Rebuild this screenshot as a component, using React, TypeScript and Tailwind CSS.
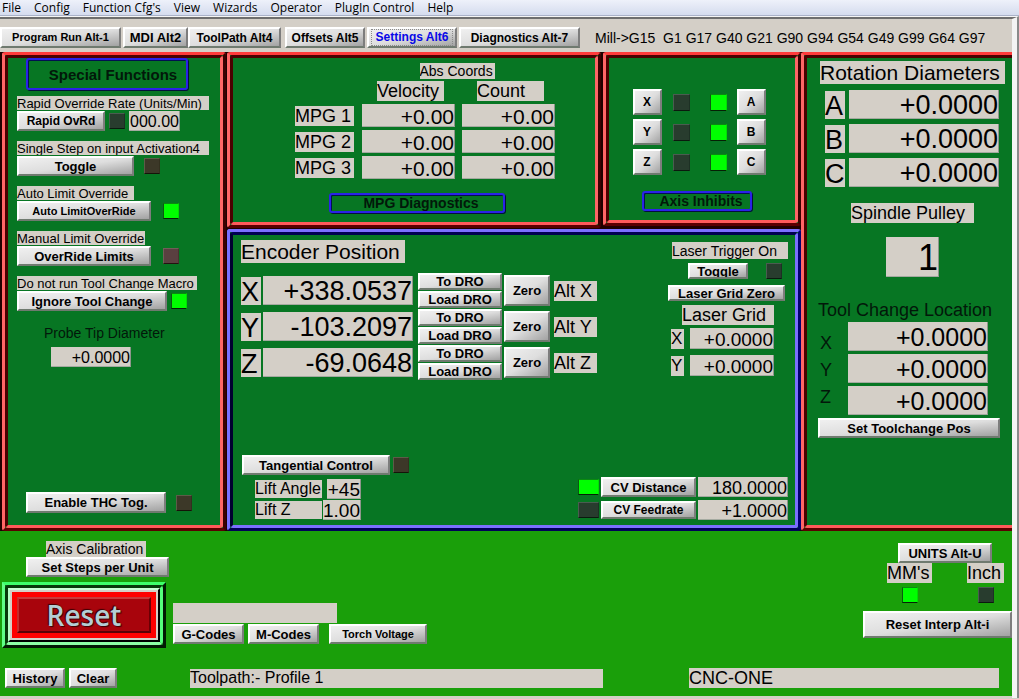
import React from "react";
import { clsx } from "clsx";

const face = "font-['Liberation_Sans',Arial,sans-serif]";

function Btn({ children, className }: { children: React.ReactNode; className?: string }) {
  return (
    <button
      type="button"
      className={clsx(
        "flex shrink-0 items-center justify-center overflow-hidden border-2 border-t-white border-r-[#7d7d7d] border-b-[#6f7a6f] border-l-white bg-linear-to-br from-[#f0f0f0] via-[#dedede] to-[#a2a2a2] font-bold whitespace-nowrap text-black",
        className,
      )}
    >
      {children}
    </button>
  );
}

function Tag({ children, className }: { children?: React.ReactNode; className?: string }) {
  return (
    <div className={clsx("flex shrink-0 items-center overflow-hidden bg-[#d4cfc7] whitespace-nowrap text-black", className)}>
      {children}
    </div>
  );
}

function Dro({ value, label, className }: { value: string; label: string; className?: string }) {
  return (
    <input
      type="text"
      aria-label={label}
      defaultValue={value}
      className={clsx(
        "shrink-0 border-r border-b border-r-[#8f968c] border-b-[#a4aaa0] bg-[#d4cfc7] p-0 pt-[3px] text-right text-black outline-none",
        className,
      )}
    />
  );
}

const ledTones = {
  on: "border-t-[#0a8a10] border-l-[#0a5a10] border-r-[#00e000] border-b-[#052005] bg-[#00ff00]",
  off: "border-t-[#4a5c50] border-l-[#4a5c50] border-r-[#1d3024] border-b-[#0a1a0e] bg-[#283c2e]",
  amber: "border-t-[#5c5c48] border-l-[#5c5c48] border-r-[#33301f] border-b-[#141408] bg-[#3c3828]",
  red: "border-t-[#6f5f58] border-l-[#6f5f58] border-r-[#4a3230] border-b-[#241210] bg-[#5a4040]",
};

function Led({ tone, className = "size-4" }: { tone: keyof typeof ledTones; className?: string }) {
  return <span className={clsx("block shrink-0 border", ledTones[tone], className)} />;
}

function Panel({
  tone,
  className,
  inner,
  children,
}: {
  tone: "red" | "blue";
  className?: string;
  inner?: string;
  children: React.ReactNode;
}) {
  const outerTone =
    tone === "red"
      ? "border-t-[#ff3b3b] border-l-[#ff6666] border-r-[#3a0000] border-b-[#5a0000]"
      : "border-t-[#7a70ff] border-l-[#7a70ff] border-r-[#000070] border-b-[#000058]";
  const innerTone =
    tone === "red"
      ? "border-t-[#4a0000] border-l-[#4a0000] border-r-[#ff6666] border-b-[#ff5a5a]"
      : "border-t-[#000050] border-l-[#000030] border-r-[#7a70ff] border-b-[#7a70ff]";
  return (
    <section className={clsx("flex flex-col rounded-[3px] border-[3px] bg-[#077623]", outerTone, className)}>
      <div className={clsx("flex min-w-0 flex-1 flex-col rounded-[3px] border-[3px]", innerTone, inner)}>{children}</div>
    </section>
  );
}

function Caption({ children, className }: { children: React.ReactNode; className?: string }) {
  return (
    <h2
      className={clsx(
        "flex shrink-0 items-center justify-center rounded-[3px] border-2 border-[#2a22e8] font-bold whitespace-nowrap text-[#02180a] shadow-[1px_1px_0_0_#03103a,inset_1px_1px_0_#021050]",
        className,
      )}
    >
      {children}
    </h2>
  );
}

const menus = ["File", "Config", "Function Cfg's", "View", "Wizards", "Operator", "PlugIn Control", "Help"];

const encoderAxes = [
  { axis: "X", value: "+338.0537" },
  { axis: "Y", value: "-103.2097" },
  { axis: "Z", value: "-69.0648" },
];

function SpecialFunctions() {
  return (
    <Panel tone="red" className="ml-0.5 w-56 shrink-0">
      <Caption className="ml-[18px] h-8 w-[162px] pl-3 text-[15px]">Special Functions</Caption>
      <div className="mt-1.5 ml-[9px] flex flex-col gap-2.5">
        <div className="flex flex-col gap-px">
          <Tag className="h-3.5 w-48 text-[13px]">Rapid Override Rate (Units/Min)</Tag>
          <div className="flex items-center gap-1">
            <Btn className="h-5 w-[88px] text-[12px]">Rapid OvRd</Btn>
            <Led tone="off" />
            <Dro label="Rapid override rate" value="000.00" className="h-5 w-[51px] text-[16px]" />
          </div>
        </div>
        <div className="flex flex-col gap-px">
          <Tag className="h-3.5 w-48 text-[13px]">Single Step on input Activation4</Tag>
          <div className="flex items-center gap-2.5">
            <Btn className="h-5 w-[117px] text-[13px]">Toggle</Btn>
            <Led tone="amber" />
          </div>
        </div>
        <div className="flex flex-col gap-px">
          <Tag className="h-3.5 w-[117px] text-[13px]">Auto Limit Override</Tag>
          <div className="flex items-center gap-3">
            <Btn className="h-5 w-[134px] text-[11px]">Auto LimitOverRide</Btn>
            <Led tone="on" />
          </div>
        </div>
        <div className="flex flex-col gap-px">
          <Tag className="h-3.5 w-32 text-[13px]">Manual Limit Override</Tag>
          <div className="flex items-center gap-3">
            <Btn className="h-5 w-[134px] text-[13px]">OverRide Limits</Btn>
            <Led tone="red" />
          </div>
        </div>
        <div className="flex flex-col gap-px">
          <Tag className="h-3.5 w-[180px] text-[13px]">Do not run Tool Change Macro</Tag>
          <div className="flex items-center gap-1">
            <Btn className="h-5 w-[150px] text-[13px]">Ignore Tool Change</Btn>
            <Led tone="on" />
          </div>
        </div>
      </div>
      <label className="mt-3 ml-9 flex flex-col gap-1 text-[14px] leading-5 text-[#02180a]">
        Probe Tip Diameter
        <Dro label="Probe Tip Diameter" value="+0.0000" className="ml-[7px] h-5 w-20 text-[16px]" />
      </label>
      <div className="mt-auto mb-3 ml-[18px] flex items-center gap-2.5">
        <Btn className="h-[21px] w-[140px] text-[13px]">Enable THC Tog.</Btn>
        <Led tone="amber" />
      </div>
    </Panel>
  );
}

function MpgPanel() {
  return (
    <Panel tone="red" className="h-[176px] flex-1" inner="items-center">
      <Tag className="mt-[5px] ml-[86px] h-4 w-[75px] text-[14px]">Abs Coords</Tag>
      <div className="mt-0.5 ml-[22px] grid grid-cols-[60px_93px_93px] gap-x-[7px] gap-y-[3px]">
        <Tag className="col-start-2 ml-[15px] h-5 w-[67px] text-[18px]">Velocity</Tag>
        <Tag className="ml-[15px] h-5 w-[67px] text-[18px]">Count</Tag>
        {["1", "2", "3"].map((n) => (
          <React.Fragment key={n}>
            <Tag className="mt-0.5 h-5 w-[59px] text-[18px]">MPG {n}</Tag>
            <Dro label={`MPG ${n} velocity`} value="+0.00" className="h-[23px] w-full text-[21px]" />
            <Dro label={`MPG ${n} count`} value="+0.00" className="h-[23px] w-full text-[21px]" />
          </React.Fragment>
        ))}
      </div>
      <Caption className="mt-3.5 ml-1.5 h-5 w-44 pl-2 text-[14px]">MPG Diagnostics</Caption>
    </Panel>
  );
}

function AxisInhibits() {
  const rows = [
    ["X", "A"],
    ["Y", "B"],
    ["Z", "C"],
  ];
  return (
    <Panel tone="red" className="h-[174px] w-[198px] shrink-0" inner="items-center">
      <div className="mt-[31px] mr-1.5 flex flex-col gap-1">
        {rows.map(([left, right]) => (
          <div key={left} className="flex items-center">
            <Btn className="h-[26px] w-[29px] text-[12px]">{left}</Btn>
            <Led tone="off" className="ml-[11px] size-[17px]" />
            <Led tone="on" className="ml-5 size-[17px]" />
            <Btn className="ml-2.5 h-[26px] w-[29px] text-[12px]">{right}</Btn>
          </div>
        ))}
      </div>
      <Caption className="mt-4 mr-2.5 h-5 w-[110px] pl-2 text-[14px]">Axis Inhibits</Caption>
    </Panel>
  );
}

function EncoderPanel() {
  return (
    <Panel tone="blue" className="mt-px min-h-[302px] flex-1" inner="justify-between">
      <div className="flex justify-between pr-1.5 pl-2">
        <div>
          <Tag className="mt-[5px] h-[23px] w-[164px] text-[21px]">Encoder Position</Tag>
          <div className="mt-2.5 flex flex-col gap-px">
            {encoderAxes.map(({ axis, value }) => (
              <div key={axis} className="flex items-center">
                <Tag className="h-7 w-5 pt-1 text-[27px]">{axis}</Tag>
                <Dro label={`${axis} encoder`} value={value} className="ml-0.5 h-[29px] w-[150px] text-[27px]" />
                <div className="ml-[5px] flex flex-col gap-px">
                  <Btn className="h-[17px] w-[84px] text-[13px]">To DRO</Btn>
                  <Btn className="h-[17px] w-[84px] text-[13px]">Load DRO</Btn>
                </div>
                <Btn className="ml-0.5 h-[31px] w-[46px] text-[13px]">Zero</Btn>
                <Tag className="ml-1 h-5 w-[43px] text-[18px]">Alt {axis}</Tag>
              </div>
            ))}
          </div>
        </div>
        <div className="mt-[7px] flex w-[121px] flex-col">
          <Tag className="ml-1 h-[17px] w-[116px] text-[14px]">Laser Trigger On</Tag>
          <div className="mt-1 ml-5 flex items-center gap-[18px]">
            <Btn className="h-4 w-[60px] text-[13px]">Toggle</Btn>
            <Led tone="off" />
          </div>
          <Btn className="mt-1.5 h-4 w-[117px] text-[13px]">Laser Grid Zero</Btn>
          <Tag className="mt-1 ml-3.5 h-5 w-[92px] text-[18px]">Laser Grid</Tag>
          {["X", "Y"].map((axis) => (
            <div key={axis} className="my-[3px] ml-[3px] flex items-center gap-1.5">
              <Tag className="h-5 w-[13px] text-[17px]">{axis}</Tag>
              <Dro label={`Laser grid ${axis}`} value="+0.0000" className="h-[21px] w-[84px] text-[19px]" />
            </div>
          ))}
        </div>
      </div>
      <div className="flex items-end justify-between pr-[7px] pb-[5px] pl-[9px]">
        <div>
          <div className="flex items-center gap-[3px]">
            <Btn className="h-5 w-[148px] text-[13px]">Tangential Control</Btn>
            <Led tone="amber" />
          </div>
          <div className="mt-1 ml-[13px] flex flex-col gap-px">
            <div className="flex items-center">
              <Tag className="h-[18px] w-[67px] text-[16px]">Lift Angle</Tag>
              <Dro label="Lift Angle" value="+45" className="ml-[5px] h-5 w-[34px] text-[19px]" />
            </div>
            <div className="flex items-center">
              <Tag className="h-[18px] w-[67px] text-[16px]">Lift Z</Tag>
              <Dro label="Lift Z" value="1.00" className="ml-px h-5 w-[38px] text-[19px]" />
            </div>
          </div>
        </div>
        <div className="flex flex-col gap-[3px]">
          <div className="flex items-center">
            <Led tone="on" className="h-4 w-[21px]" />
            <Btn className="ml-0.5 h-5 w-[95px] text-[13px]">CV Distance</Btn>
            <Dro label="CV Distance" value="180.0000" className="ml-0.5 h-5 w-[90px] text-[18px]" />
          </div>
          <div className="flex items-center">
            <Led tone="off" className="h-4 w-[21px]" />
            <Btn className="ml-0.5 h-[18px] w-[95px] text-[12px]">CV Feedrate</Btn>
            <Dro label="CV Feedrate" value="+1.0000" className="ml-0.5 h-5 w-[90px] text-[18px]" />
          </div>
        </div>
      </div>
    </Panel>
  );
}

function RotationPanel() {
  return (
    <Panel tone="red" className="w-[211px] shrink-0 rounded-r-none border-r-0" inner="rounded-r-none border-r-0">
      <Tag className="mt-[3px] ml-[13px] h-[23px] w-[185px] text-[21px]">Rotation Diameters</Tag>
      <div className="mt-1.5 ml-[18px] flex flex-col gap-[5px]">
        {["A", "B", "C"].map((axis) => (
          <div key={axis} className="flex items-center gap-1">
            <Tag className="h-7 w-5 pt-1 text-[27px]">{axis}</Tag>
            <Dro label={`Rotation diameter ${axis}`} value="+0.0000" className="h-[29px] w-[150px] text-[27px]" />
          </div>
        ))}
      </div>
      <Tag className="mt-4 ml-11 h-5 w-[123px] text-[18px]">Spindle Pulley</Tag>
      <Dro label="Spindle Pulley" value="1" className="mt-3.5 ml-[79px] h-10 w-[53px] text-[36px]" />
      <h3 className="mt-[23px] ml-[11px] text-[18px] leading-5 whitespace-nowrap text-[#02180a]">Tool Change Location</h3>
      <div className="mt-0.5 ml-[13px] flex items-start text-[18px] text-[#02180a]">
        <div className="w-7 pt-2 leading-[27px]">
          <div>X</div>
          <div>Y</div>
          <div>Z</div>
        </div>
        <div className="flex flex-col gap-[3px]">
          {["X", "Y", "Z"].map((axis) => (
            <Dro key={axis} label={`Tool change ${axis}`} value="+0.0000" className="h-[29px] w-[140px] text-[25px]" />
          ))}
        </div>
      </div>
      <Btn className="mt-[3px] ml-[11px] h-5 w-[182px] text-[13px]">Set Toolchange Pos</Btn>
    </Panel>
  );
}

function ResetButton() {
  return (
    <button type="button" className="flex h-[66px] w-[164px] border-[3px] border-t-[#3dff6a] border-r-[#021a04] border-b-[#021a04] border-l-[#5fff86] bg-[#0c6b14]">
      <span className="flex flex-1 self-stretch rounded border-[3px] border-t-[#063a0a] border-r-[#55ff7c] border-b-[#8dffa6] border-l-[#063a0a] bg-[#063a0a]">
        <span className="flex flex-1 border-2 border-t-[#c8ffd4] border-r-black border-b-black border-l-[#b8ffc8] bg-[#d4cfc7] p-0.5">
          <span className="flex flex-1 bg-[#fe0000] p-[5px]">
            <span className="flex flex-1 items-center justify-center border-2 border-t-[#c83a3a] border-r-[#6a0004] border-b-[#5a0004] border-l-[#c02c2c] bg-[#a8040c] font-['Open_Sans','Noto_Sans',sans-serif] text-[28px] leading-6 font-semibold text-[#b4ced4] [text-shadow:1px_1px_1px_#3a0004,-1px_-1px_1px_#3a0004]">
              Reset
            </span>
          </span>
        </span>
      </span>
    </button>
  );
}

function BottomArea() {
  return (
    <footer className="flex h-[165px] flex-col bg-[#1a9f0a]">
      <div className="flex justify-between">
        <div>
          <Tag className="mt-2.5 ml-[46px] h-4 w-[100px] text-[14px]">Axis Calibration</Tag>
          <Btn className="ml-[26px] h-5 w-[143px] text-[13px]">Set Steps per Unit</Btn>
          <div className="mt-[5px] ml-0.5 flex items-end gap-[7px]">
            <ResetButton />
            <div className="mb-1">
              <Tag className="h-5 w-[164px]" />
              <div className="mt-px flex">
                <Btn className="h-5 w-[71px] text-[13px]">G-Codes</Btn>
                <Btn className="ml-1 h-5 w-[71px] text-[13px]">M-Codes</Btn>
                <Btn className="ml-2.5 h-5 w-[98px] text-[11px]">Torch Voltage</Btn>
              </div>
            </div>
          </div>
        </div>
        <div className="flex w-[149px] flex-col">
          <Btn className="mt-3 ml-[35px] h-5 w-[94px] text-[13px]">UNITS Alt-U</Btn>
          <div className="ml-6 flex justify-between pr-2">
            <div className="flex w-[45px] flex-col items-center gap-1">
              <Tag className="h-5 w-full text-[18px]">MM's</Tag>
              <Led tone="on" />
            </div>
            <div className="flex w-[37px] flex-col items-center gap-1">
              <Tag className="h-5 w-full text-[18px]">Inch</Tag>
              <Led tone="off" />
            </div>
          </div>
          <Btn className="mt-2 h-[27px] w-full text-[13px]">Reset Interp Alt-i</Btn>
        </div>
      </div>
      <div className="mt-auto mb-2 flex items-center pr-[13px] pl-[5px]">
        <Btn className="h-5 w-[60px] text-[13px]">History</Btn>
        <Btn className="ml-1 h-5 w-12 text-[13px]">Clear</Btn>
        <Tag className="ml-[73px] h-[19px] w-[413px] text-[16px]">Toolpath:- Profile 1</Tag>
        <Tag className="ml-auto h-5 w-[310px] text-[18px]">CNC-ONE</Tag>
      </div>
    </footer>
  );
}

export default function App() {
  return (
    <div className={clsx("min-h-screen bg-[#d4cfc7] leading-none text-black", face)}>
      <nav className="flex h-4 items-center gap-[13px] border-b border-[#aab2c8] bg-linear-to-b from-[#eef1fa] to-[#d5dcee] pl-0.5 font-['Open_Sans','Noto_Sans',sans-serif] text-[12px] leading-none">
        {menus.map((name) => (
          <button key={name} type="button" className="whitespace-nowrap">
            {name}
          </button>
        ))}
      </nav>
      <div className="border-t border-r-2 border-t-[#f5f5f5] border-r-[#8a8a8a]">
        <div className="border-t-2 border-r-[5px] border-t-[#6e6e6e] border-r-[#f4f4f4] pb-0.5">
          <header className="flex h-[33px] items-center pt-2 pb-1">
            <Btn className="h-[21px] w-[121px] text-[11px]">Program Run Alt-1</Btn>
            <Btn className="ml-0.5 h-[21px] w-[65px] text-[13px]">MDI Alt2</Btn>
            <Btn className="h-[21px] w-[93px] text-[12px]">ToolPath Alt4</Btn>
            <Btn className="ml-1 h-[21px] w-20 text-[12px]">Offsets Alt5</Btn>
            <Btn className="ml-0.5 h-[21px] w-[90px] text-[12px]">
              <span className="border border-dotted border-[#8a8a8a] px-1 py-px leading-[13px] text-[#0808e8]">Settings Alt6</span>
            </Btn>
            <Btn className="ml-0.5 h-[21px] w-[121px] text-[12px]">Diagnostics Alt-7</Btn>
            <p className="ml-[15px] text-[14px] whitespace-pre">Mill-&gt;G15  G1 G17 G40 G21 G90 G94 G54 G49 G99 G64 G97</p>
          </header>
          <main className="bg-[#1a9f0a]">
            <div className="flex bg-[#200000]">
              <SpecialFunctions />
              <div className="ml-px flex min-w-0 flex-1 flex-col">
                <div className="flex gap-0.5">
                  <MpgPanel />
                  <AxisInhibits />
                </div>
                <EncoderPanel />
              </div>
              <RotationPanel />
            </div>
            <BottomArea />
          </main>
        </div>
      </div>
    </div>
  );
}
